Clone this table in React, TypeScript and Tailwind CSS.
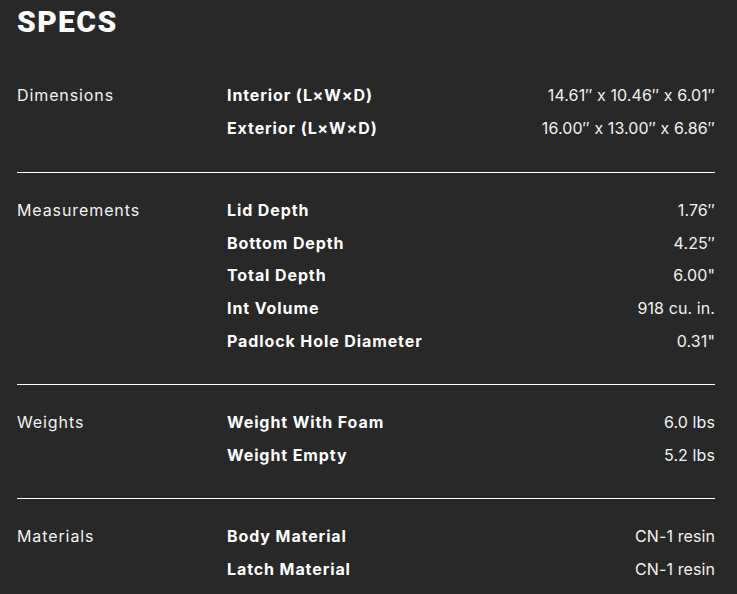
const sections = [
  {
    label: "Dimensions",
    rows: [
      ["Interior (L×W×D)", "14.61″ x 10.46″ x 6.01″"],
      ["Exterior (L×W×D)", "16.00″ x 13.00″ x 6.86″"],
    ],
  },
  {
    label: "Measurements",
    rows: [
      ["Lid Depth", "1.76″"],
      ["Bottom Depth", "4.25″"],
      ["Total Depth", "6.00\""],
      ["Int Volume", "918 cu. in."],
      ["Padlock Hole Diameter", "0.31\""],
    ],
  },
  {
    label: "Weights",
    rows: [
      ["Weight With Foam", "6.0 lbs"],
      ["Weight Empty", "5.2 lbs"],
    ],
  },
  {
    label: "Materials",
    rows: [
      ["Body Material", "CN-1 resin"],
      ["Latch Material", "CN-1 resin"],
    ],
  },
];

export default function App() {
  return (
    <div className="min-h-[594px] bg-[#282828] text-white pl-[17px] pr-[22px] pt-[4px] font-['Inter',sans-serif]">
      <h1 className="text-[30px] leading-[36px] font-black tracking-[1.4px] font-['Roboto',sans-serif]">SPECS</h1>
      <div className="mt-[39px]">
        {sections.map((s, i) => (
          <div
            key={s.label}
            className={
              i === 0
                ? "grid grid-cols-[210px_1fr_auto] pb-[28px] border-b border-white"
                : "grid grid-cols-[210px_1fr_auto] pt-[21px] pb-[27px] border-b border-white last:border-b-0"
            }
          >
            <div className="text-[16px] leading-[32.6px] tracking-[0.9px] text-[#f2f2f2]">{s.label}</div>
            <div className="flex flex-col">
              {s.rows.map(([name]) => (
                <div key={name} className="text-[16px] leading-[32.6px] tracking-[0.9px] font-bold">
                  {name}
                </div>
              ))}
            </div>
            <div className="flex flex-col items-end">
              {s.rows.map(([name, value]) => (
                <div key={name} className="text-[16px] leading-[32.6px] tracking-[0.1px] text-[#f2f2f2]">
                  {value}
                </div>
              ))}
            </div>
          </div>
        ))}
      </div>
    </div>
  );
}
